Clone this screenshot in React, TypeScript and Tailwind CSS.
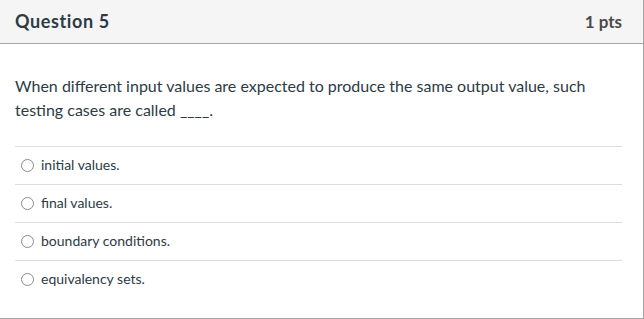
import React from "react";

const options = [
  "initial values.",
  "final values.",
  "boundary conditions.",
  "equivalency sets.",
];

const App: React.FC = () => {
  return (
    <div
      className="w-[644px] h-[319px] bg-white text-[#2d3b45] overflow-hidden"
      style={{ fontFamily: "Lato, 'Liberation Sans', sans-serif" }}
    >
      <div className="w-[644px] h-[319px] border-r border-b border-[#a5a5a5]">
        <div className="h-[44px] bg-[#f5f5f5] border-b border-[#a5a5a5] flex items-center justify-between pl-[15px] pr-[21px]">
          <span className="text-[18px] font-bold tracking-[0.6px]">Question 5</span>
          <span className="text-[17px] font-bold text-[#4a4a4a]">1 pts</span>
        </div>

        <div className="px-[15px]">
          <div className="pt-[30px] pb-[24px] text-[16px] leading-[24px] pr-[30px]">
            When different input values are expected to produce the same output value, such
            testing cases are called ____.
          </div>

          {options.map((opt) => (
            <div
              key={opt}
              className="h-[38px] border-t border-[#dddddd] flex items-center mr-[6px]"
            >
              <span className="ml-[6px] w-[13px] h-[13px] rounded-full border border-[#8a8a8a] bg-white" />
              <span className="ml-[7px] text-[14px] leading-[16px] pb-[2px]">{opt}</span>
            </div>
          ))}
        </div>
      </div>
    </div>
  );
};

export default App;
